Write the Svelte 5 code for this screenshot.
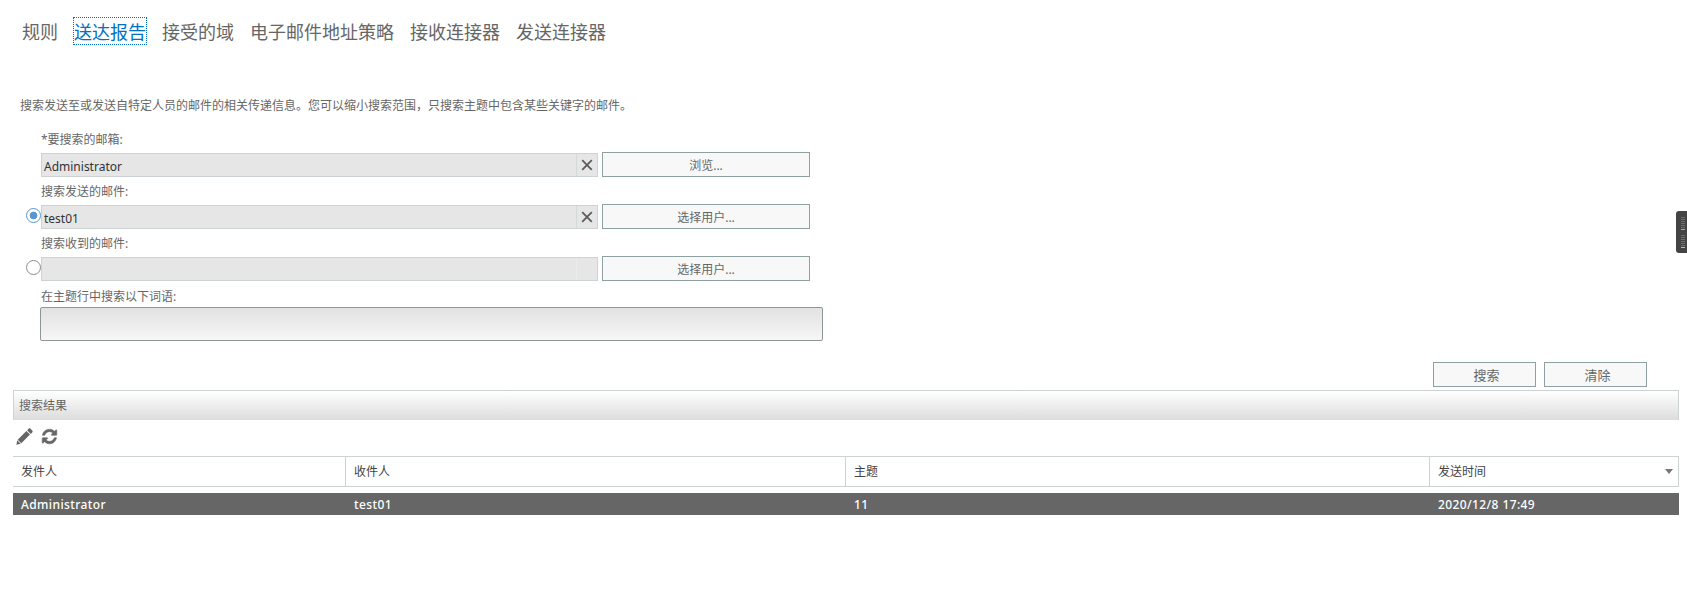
<script lang="ts">
  // Delivery report search page
  const tabs = ['规则', '送达报告', '接受的域', '电子邮件地址策略', '接收连接器', '发送连接器'];
  const columns = ['发件人', '收件人', '主题', '发送时间'];
  const row = ['Administrator', 'test01', '11', '2020/12/8 17:49'];
</script>

{#snippet clearIcon()}
  <svg width="14" height="14" viewBox="0 0 14 14" aria-hidden="true">
    <path d="M2.200 2.200l9.600 9.600M11.800 2.200l-9.600 9.600" stroke="#5c5c5c" stroke-width="1.800" fill="none" />
  </svg>
{/snippet}

<div class="page">
  <nav class="tabs">
    {#each tabs as tab, i}
      <span class="tab" class:active={i === 1}>{tab}</span>
    {/each}
  </nav>

  <p class="intro">搜索发送至或发送自特定人员的邮件的相关传递信息。您可以缩小搜索范围，只搜索主题中包含某些关键字的邮件。</p>

  <form class="form">
    <label class="label first" for="mailbox">*要搜索的邮箱:</label>
    <div class="line">
      <span class="radio-slot"></span>
      <div class="field"><span id="mailbox" class="value">Administrator</span><span class="clear">{@render clearIcon()}</span></div>
      <span class="btn wide">浏览...</span>
    </div>

    <div class="label">搜索发送的邮件:</div>
    <div class="line">
      <span class="radio-slot"><span class="radio checked"></span></span>
      <div class="field"><span class="value">test01</span><span class="clear">{@render clearIcon()}</span></div>
      <span class="btn wide">选择用户...</span>
    </div>

    <div class="label">搜索收到的邮件:</div>
    <div class="line">
      <span class="radio-slot"><span class="radio"></span></span>
      <div class="field"><span class="value"></span><span class="clear"></span></div>
      <span class="btn wide">选择用户...</span>
    </div>

    <div class="label subject-label">在主题行中搜索以下词语:</div>
    <div class="subject"></div>
  </form>

  <div class="actions">
    <span class="btn action">搜索</span>
    <span class="btn action">清除</span>
  </div>

  <section class="results">
    <div class="results-title">搜索结果</div>
    <div class="toolbar">
      <svg width="17" height="17" viewBox="0 0 17 17" aria-hidden="true">
        <path d="M12.800.6c.5-.4 1.100-.4 1.500 0l2.100 2.100c.4.4.4 1 0 1.500l-1.700 1.700-3.600-3.600zM10.400 3l3.600 3.600-8.700 8.700-3.600-3.600zM1.200 12.300l3.500 3.500-4.300 1z" fill="#666" />
      </svg>
      <svg width="17" height="17" viewBox="0 0 1792 1792" aria-hidden="true">
        <path d="M1639 1056q0 5-1 7-64 268-268 434.500t-478 166.500q-146 0-282.500-55t-243.500-157l-129 129q-19 19-45 19t-45-19-19-45v-448q0-26 19-45t45-19h448q26 0 45 19t19 45-19 45l-137 137q71 66 161 102t187 36q134 0 250-65t186-179q11-17 53-117 8-23 30-23h192q13 0 22.500 9.500t9.500 22.500zm25-800v448q0 26-19 45t-45 19h-448q-26 0-45-19t-19-45 19-45l138-138q-148-137-349-137-134 0-250 65t-186 179q-11 17-53 117-8 23-30 23h-199q-13 0-22.500-9.500t-9.500-22.500v-7q65-268 270-434.500t480-166.500q146 0 284 55.500t245 156.500l130-129q19-19 45-19t45 19 19 45z" fill="#666" stroke="#666" stroke-width="60" />
      </svg>
    </div>

    <div class="grid head">
      {#each columns as col, i}
        <div class="cell">
          {col}
          {#if i === 3}<span class="sort"></span>{/if}
        </div>
      {/each}
    </div>
    <div class="grid data">
      {#each row as val}
        <div class="cell">{val}</div>
      {/each}
    </div>
  </section>

  <div class="handle" aria-hidden="true">
    {#each [0, 1, 2, 3, 4, 5] as n}<i></i>{/each}
    <i class="orange"></i>
    <b></b>
    {#each [0, 1, 2, 3, 4, 5] as n}<i></i>{/each}
    <i class="green"></i>
  </div>
</div>

<style>
  :global(body) {
    margin: 0;
    background: #fff;
  }

  .page {
    position: relative;
    width: 1687px;
    height: 598px;
    overflow: hidden;
    font-family: "Noto Sans", "Noto Sans CJK SC", sans-serif;
    font-size: 12px;
    color: #666;
  }

  .tabs {
    display: flex;
    gap: 14px;
    padding: 18px 0 0 21px;
    height: 26px;
  }

  .tab {
    height: 26px;
    border: 1px dotted transparent;
    font-size: 18px;
    line-height: 26px;
    font-family: "Noto Sans CJK SC", sans-serif;
    box-sizing: content-box;
    margin-top: -1px;
  }

  .tab.active {
    color: #0072c6;
    border-color: #0072c6;
  }

  .intro {
    margin: 52px 0 0 20px;
    height: 20px;
    line-height: 20px;
  }

  .form {
    margin: 0;
    padding: 0 0 0 26px;
  }

  .label {
    display: block;
    margin-left: 15px;
    height: 16px;
    line-height: 16px;
    margin-top: 7px;
    margin-bottom: 4px;
  }

  .label.first {
    margin-top: 16px;
    margin-bottom: 4px;
  }

  .subject-label {
    margin-top: 8px;
    margin-bottom: 2px;
  }

  .line {
    display: flex;
    align-items: flex-end;
    height: 25px;
  }

  .radio-slot {
    width: 15px;
    flex: none;
    align-self: flex-start;
  }

  .radio {
    display: block;
    box-sizing: border-box;
    width: 15px;
    height: 15px;
    margin-top: 4px;
    border: 1px solid #8a8a8a;
    border-radius: 50%;
    background: #fff;
  }

  .radio.checked {
    border-color: #5b97cf;
    background: radial-gradient(circle, #5b97cf 0 3.5px, #fff 4.2px);
  }

  .field {
    display: flex;
    box-sizing: border-box;
    width: 557px;
    height: 24px;
    border: 1px solid #cdd3d3;
    background: #e6e6e6;
    color: #333;
  }

  .value {
    flex: 1;
    padding-left: 2px;
    line-height: 25px;
  }

  .clear {
    display: flex;
    align-items: center;
    justify-content: center;
    width: 20px;
    border-left: 1px solid #d4d9d9;
  }

  .clear:empty {
    border-left-color: #ebebeb;
  }

  .btn {
    display: block;
    box-sizing: border-box;
    height: 25px;
    border: 1px solid #8fa0a0;
    background: #f8f8f8;
    text-align: center;
    line-height: 25px;
  }

  .btn.wide {
    width: 208px;
    margin-left: 4px;
  }

  .subject {
    box-sizing: border-box;
    width: 783px;
    height: 34px;
    margin-left: 14px;
    border: 1px solid #8e9696;
    border-radius: 2px;
    background: linear-gradient(#e2e2e2, #f6f6f6);
  }

  .actions {
    display: flex;
    justify-content: flex-end;
    gap: 8px;
    margin-top: 21px;
    padding-right: 40px;
  }

  .btn.action {
    width: 103px;
    padding-left: 4px;
    font-size: 13px;
  }

  .results {
    margin: 3px 8px 0 13px;
  }

  .results-title {
    box-sizing: border-box;
    height: 30px;
    padding-left: 5px;
    border: 1px solid #cdd3d3;
    border-bottom: none;
    background: linear-gradient(#fff, #dcdcdc);
    line-height: 29px;
  }

  .toolbar {
    display: flex;
    align-items: center;
    gap: 8px;
    box-sizing: border-box;
    height: 36px;
    padding: 0 0 4px 3px;
  }

  .grid {
    display: grid;
    grid-template-columns: 332px 500px 584px 1fr;
  }

  .head {
    height: 31px;
    box-sizing: border-box;
    border-top: 1px solid #cdd3d3;
    border-bottom: 1px solid #cdd3d3;
    border-right: 1px solid #cdd3d3;
    color: #444;
  }

  .head .cell {
    position: relative;
    padding-left: 8px;
    line-height: 30px;
    height: 29px;
  }

  .head .cell + .cell {
    border-left: 1px solid #cdd3d3;
  }

  .sort {
    position: absolute;
    right: 5px;
    top: 12px;
    border-left: 4px solid transparent;
    border-right: 4px solid transparent;
    border-top: 5px solid #777;
  }

  .data {
    height: 22px;
    margin-top: 6px;
    background: #666;
    color: #fff;
    font-weight: 500;
    letter-spacing: 0.4px;
  }

  .data .cell {
    padding-left: 8px;
    line-height: 23px;
  }

  .data .cell + .cell {
    padding-left: 9px;
  }

  .handle {
    position: absolute;
    top: 211px;
    right: 0;
    box-sizing: border-box;
    width: 11px;
    height: 42px;
    padding: 6px 2px 0 5px;
    background: #444;
    border-radius: 3px 0 0 3px;
    display: flex;
    flex-direction: column;
    gap: 1px;
  }

  .handle i {
    display: block;
    height: 1px;
    background: #6f6f6f;
  }

  .handle b {
    display: block;
    height: 3px;
  }

  .handle .orange {
    background: #f0a030;
  }

  .handle .green {
    background: #9fe050;
  }
</style>
